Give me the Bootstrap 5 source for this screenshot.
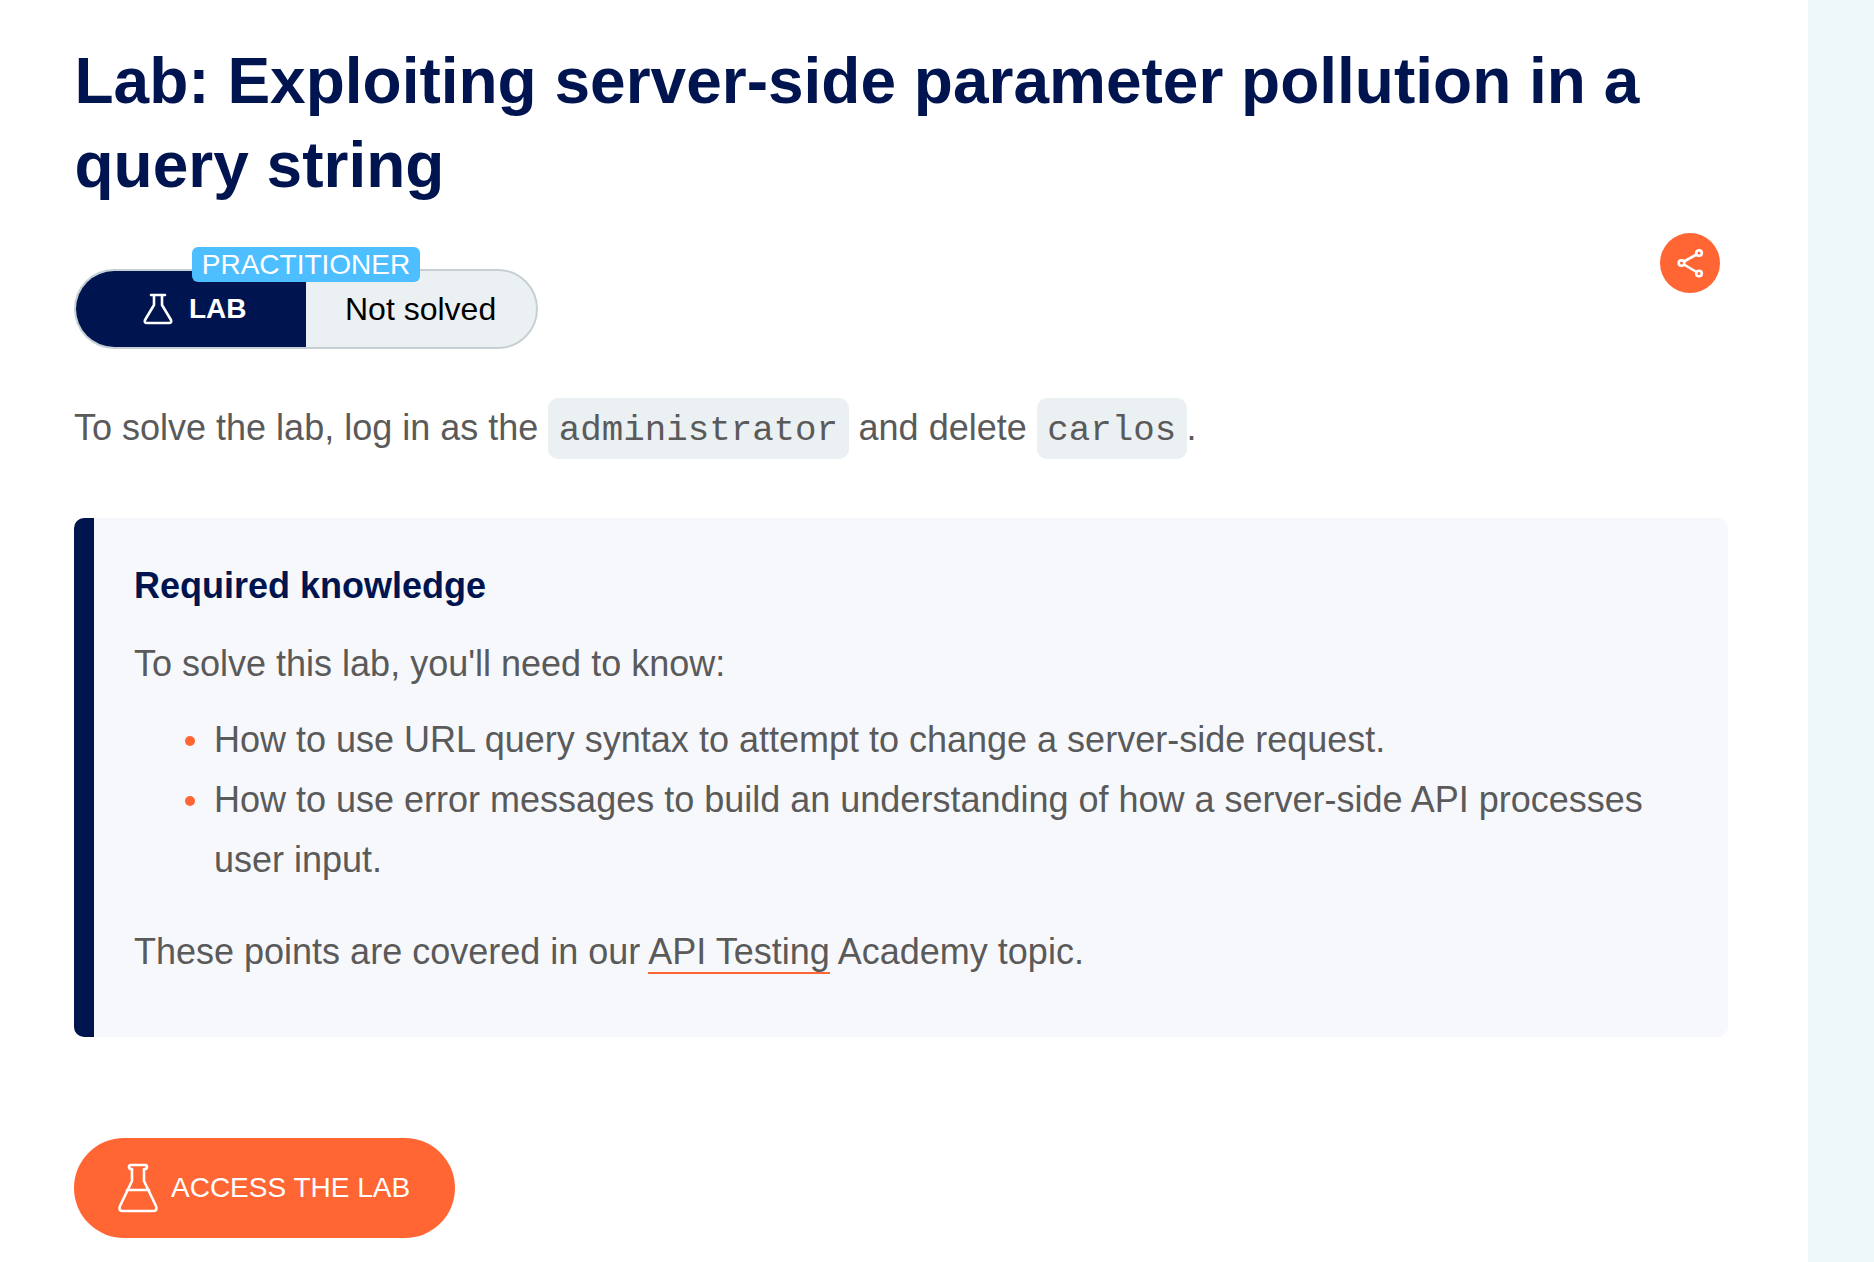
<!DOCTYPE html>
<html lang="en"><head><meta charset="utf-8"><title>Lab</title>
<link href="https://cdn.jsdelivr.net/npm/bootstrap@5.3.0/dist/css/bootstrap.min.css" rel="stylesheet">
<style>
html,body{height:100%}
body{font-family:"Liberation Sans",Arial,sans-serif;font-size:36px;color:#5a5a5a;background:#eef8fa;overflow:hidden}
.pg{display:flex;height:1262px}
.mainp{width:1808px;background:#fff;padding:39px 74px 0}
.ttl{font-size:64px;font-weight:700;line-height:84px;color:#00144f;margin:0 0 0 .5px;width:1640px}
.statusrow{margin-top:26px;height:107px;position:relative;width:1652px}
.pill{position:absolute;top:36px;left:0;width:464px;height:80px;border:2px solid #c6d0d4;border-radius:40px;display:flex;overflow:hidden;background:#ebf0f2}
.pleft{width:230px;background:#00144f;color:#fff;font-size:28px;font-weight:700;padding-left:67px;gap:16px}
.pright{flex:1;color:#000;font-size:32px;padding-left:39px}
.tag{position:absolute;left:118px;top:14px;width:228px;height:35px;background:#4dbeff;color:#fff;font-size:28px;border-radius:6px;line-height:36px;text-align:center;z-index:2}
.sharebtn{position:absolute;right:6px;top:0;width:60px;height:60px;border-radius:50%;background:#ff6633}
.para{margin:58px 0 0;line-height:60px;white-space:nowrap}
.cd{font-family:"Liberation Mono",monospace;font-size:35.8px;background:#ebf0f2;color:#5a5a5a;padding:12px 10.5px 8px;border-radius:10px}
.info{margin-top:57px;width:1654px;height:519px;background:#f7f8fc;border-left:20px solid #00144f;border-radius:10px;padding:40px 40px}
.info h4{font-size:36px;font-weight:700;color:#00144f;margin:0;line-height:56px}
.info p{margin:0;line-height:60px}
.p1{margin-top:20px!important}
.info ul{margin:16px 0 0;padding:0 0 0 80px;list-style:none}
.info li{line-height:60px;position:relative}
.info li::before{content:"";position:absolute;left:-29px;top:26px;width:10px;height:10px;border-radius:50%;background:#ff6633}
.p2{margin-top:32px!important}
.ulnk{color:inherit;text-decoration:none;border-bottom:2px solid #ff6633}
.acc{margin-top:101px;width:381px;height:100px;border-radius:50px;background:#ff6633;color:#fff;font-size:28px;border:0;padding:0 0 0 43px;gap:12px}
</style></head><body>
<div class="pg"><div class="mainp">
<h1 class="ttl">Lab: Exploiting server-side parameter pollution in a query string</h1>
<div class="statusrow">
<div class="tag">PRACTITIONER</div>
<div class="pill"><div class="pleft d-flex align-items-center"><svg width="30" height="32" viewBox="0 0 30 32" fill="none" stroke="#fff" stroke-width="2.6" stroke-linejoin="round" stroke-linecap="round"><path d="M8 2h14M11 2v10L2 27q-1 3 2 3h22q3 0 2-3L19 12V2"/></svg><span>LAB</span></div><div class="pright d-flex align-items-center">Not solved</div></div>
<div class="sharebtn d-flex align-items-center justify-content-center"><svg width="30" height="30" viewBox="0 0 30 30" fill="none" stroke="#fff" stroke-width="2.6"><circle cx="24" cy="5" r="2.800"/><circle cx="6.500" cy="15" r="2.800"/><circle cx="24" cy="25.500" r="2.800"/><path d="M9 13.500 21.500 6.500M9 16.500 21.500 24"/></svg></div>
</div>
<p class="para">To solve the lab, log in as the <code class="cd">administrator</code> and delete <code class="cd">carlos</code>.</p>
<div class="info">
<h4>Required knowledge</h4>
<p class="p1">To solve this lab, you'll need to know:</p>
<ul><li>How to use URL query syntax to attempt to change a server-side request.</li><li>How to use error messages to build an understanding of how a server-side API processes user input.</li></ul>
<p class="p2">These points are covered in our <a href="#" class="ulnk">API Testing</a> Academy topic.</p>
</div>
<button class="btn acc d-flex align-items-center"><svg width="42" height="50" viewBox="0 0 42 50" fill="none" stroke="#fff" stroke-width="2.600" stroke-linejoin="round" stroke-linecap="round"><path d="M13 2h16q2 2 0 4h-2v12l12 25q2 5-3 5H6q-5 0-3-5l12-25V6h-2q-2-2 0-4zM10 27h22"/></svg><span>ACCESS THE LAB</span></button>
</div></div>
</body></html>
